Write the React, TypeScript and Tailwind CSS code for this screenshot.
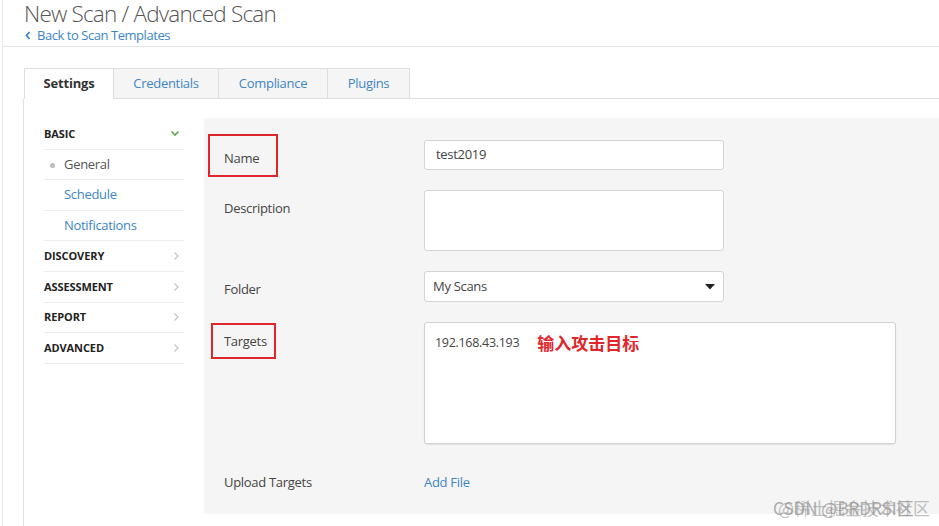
import React from "react";

const font = { fontFamily: '"Open Sans", "Noto Sans CJK SC", sans-serif' };

function ChevronRight() {
  return (
    <svg width="7" height="10" viewBox="0 0 7 10" className="text-[#c4c4c4]">
      <path d="M1.5 1.5 L5 5 L1.5 8.5" fill="none" stroke="currentColor" strokeWidth="1.3" />
    </svg>
  );
}

function ChevronDown() {
  return (
    <svg width="10" height="7" viewBox="0 0 10 7" className="text-[#5aa64a]">
      <path d="M1.5 1.5 L5 5 L8.5 1.5" fill="none" stroke="currentColor" strokeWidth="1.6" />
    </svg>
  );
}

function NavHead({ label, open }: { label: string; open?: boolean }) {
  return (
    <div className="h-[30.6px] flex items-center justify-between border-b border-[#ececec] pr-[4px]">
      <span className="text-[11px] font-bold text-[#222] tracking-[-0.1px]">{label}</span>
      {open ? <ChevronDown /> : <ChevronRight />}
    </div>
  );
}

function NavItem({ label, active }: { label: string; active?: boolean }) {
  return (
    <div className="h-[30.6px] flex items-center border-b border-[#ececec] relative pl-[20px]">
      {active && <span className="absolute left-[6px] top-[13px] w-[5px] h-[5px] rounded-full bg-[#bdbdbd]" />}
      <span className={active ? "text-[13px] text-[#555] tracking-[-0.3px]" : "text-[13px] text-[#3d85c6] tracking-[-0.3px]"}>{label}</span>
    </div>
  );
}

export default function App() {
  return (
    <div className="w-[939px] h-[526px] bg-white overflow-hidden relative" style={font}>
      <div className="ml-[2px] h-full border-l border-[#e6e6e6]">
        {/* header */}
        <div className="pl-[21px] pt-[1px] pb-[3px] border-b border-[#e4e4e4]">
          <div className="text-[22.5px] leading-[25px] font-light text-[#555] tracking-[-0.8px]">New Scan / Advanced Scan</div>
          <div className="mt-[1px] flex items-center text-[13px] leading-[16px] text-[#3d85c6] tracking-[-0.45px]">
            <svg width="6" height="9" viewBox="0 0 6 9" className="mr-[6px] ml-[1px]">
              <path d="M4.5 1 L1.5 4.5 L4.5 8" fill="none" stroke="#3d85c6" strokeWidth="1.8" />
            </svg>
            Back to Scan Templates
          </div>
        </div>

        {/* tabs */}
        <div className="pl-[21px] mt-[21px] flex">
          <div className="w-[90px] h-[31px] flex items-center justify-center bg-white border border-b-0 border-[#dedede] text-[13px] font-bold text-[#333] tracking-[-0.2px]">
            Settings
          </div>
          <div className="flex-1 flex border-b border-[#dedede] text-[13px] text-[#3d85c6] tracking-[-0.3px]">
            <div className="w-[105px] h-[30px] flex items-center justify-center bg-[#f5f5f5] border-t border-r border-[#dedede]">Credentials</div>
            <div className="w-[109px] h-[30px] flex items-center justify-center bg-[#f5f5f5] border-t border-r border-[#dedede]">Compliance</div>
            <div className="w-[82px] h-[30px] flex items-center justify-center bg-[#f5f5f5] border-t border-r border-[#dedede]">Plugins</div>
          </div>
        </div>

        {/* body */}
        <div className="ml-[20px] border-l border-[#e2e2e2] h-[430px] pt-[19px] flex">
          <div className="w-[180px] pl-[20px] pr-[20px] pt-[1px]">
            <NavHead label="BASIC" open />
            <NavItem label="General" active />
            <NavItem label="Schedule" />
            <NavItem label="Notifications" />
            <NavHead label="DISCOVERY" />
            <NavHead label="ASSESSMENT" />
            <NavHead label="REPORT" />
            <NavHead label="ADVANCED" />
          </div>

          <div className="flex-1 h-[396px] bg-[#f5f5f5] pl-[20px] text-[13px] text-[#444] tracking-[-0.3px]">
            {/* Name */}
            <div className="flex mt-[22px]">
              <div className="w-[200px] pt-[8px]">
                <div className="relative leading-[20px]">
                  Name
                  <div className="absolute left-[-16px] top-[-14px] w-[70px] h-[43px] border-2 border-[#e0252b]" />
                </div>
              </div>
              <div className="w-[300px] h-[30px] bg-white border border-[#d4d4d4] rounded-[3px] flex items-center px-[11px] text-[#444]">test2019</div>
            </div>
            {/* Description */}
            <div className="flex mt-[20px]">
              <div className="w-[200px] pt-[8px] leading-[20px]">Description</div>
              <div className="w-[300px] h-[61px] bg-white border border-[#d4d4d4] rounded-[3px]" />
            </div>
            {/* Folder */}
            <div className="flex mt-[20px]">
              <div className="w-[200px] pt-[8px] leading-[20px]">Folder</div>
              <div className="w-[300px] h-[31px] bg-white border border-[#d4d4d4] rounded-[3px] flex items-center justify-between pl-[8px] pr-[8px] text-[#444]">
                <span>My Scans</span>
                <svg width="10" height="6" viewBox="0 0 10 6">
                  <path d="M0 0 L10 0 L5 5.5 Z" fill="#222" />
                </svg>
              </div>
            </div>
            {/* Targets */}
            <div className="flex mt-[20px]">
              <div className="w-[200px] pt-[9px]">
                <div className="relative leading-[20px]">
                  Targets
                  <div className="absolute left-[-13px] top-[-8px] w-[65px] h-[36px] border-2 border-[#e0252b]" />
                </div>
              </div>
              <div className="w-[472px] h-[122px] bg-white border border-[#d0d0d0] rounded-[3px] shadow-[0_1px_1px_rgba(0,0,0,0.08)] pl-[10px] pt-[9px] flex items-start">
                <span className="leading-[22px] text-[#444] text-[12.5px]">192.168.43.193</span>
                <span className="ml-[18px] leading-[22px] text-[17px] font-bold text-[#e0252b] tracking-[0px]" style={{ fontFamily: '"Noto Sans CJK SC", sans-serif' }}>输入攻击目标</span>
              </div>
            </div>
            {/* Upload */}
            <div className="flex mt-[28px]">
              <div className="w-[200px] leading-[20px]">Upload Targets</div>
              <div className="leading-[20px] text-[#3d85c6]">Add File</div>
            </div>
          </div>
        </div>
      </div>

      {/* watermark */}
      <div className="absolute left-[773px] top-[497px] text-[17px] leading-[22px] text-[#9a9a9a] opacity-80 whitespace-nowrap" style={{ fontFamily: '"Noto Sans CJK SC", sans-serif' }}>
        CSDN @BRDRSI区
      </div>
      <div className="absolute left-[778px] top-[497px] text-[17px] leading-[22px] text-[#9a9a9a] opacity-60 whitespace-nowrap" style={{ fontFamily: '"Noto Sans CJK SC", sans-serif' }}>
        @稀土掘金技术社区
      </div>
    </div>
  );
}
